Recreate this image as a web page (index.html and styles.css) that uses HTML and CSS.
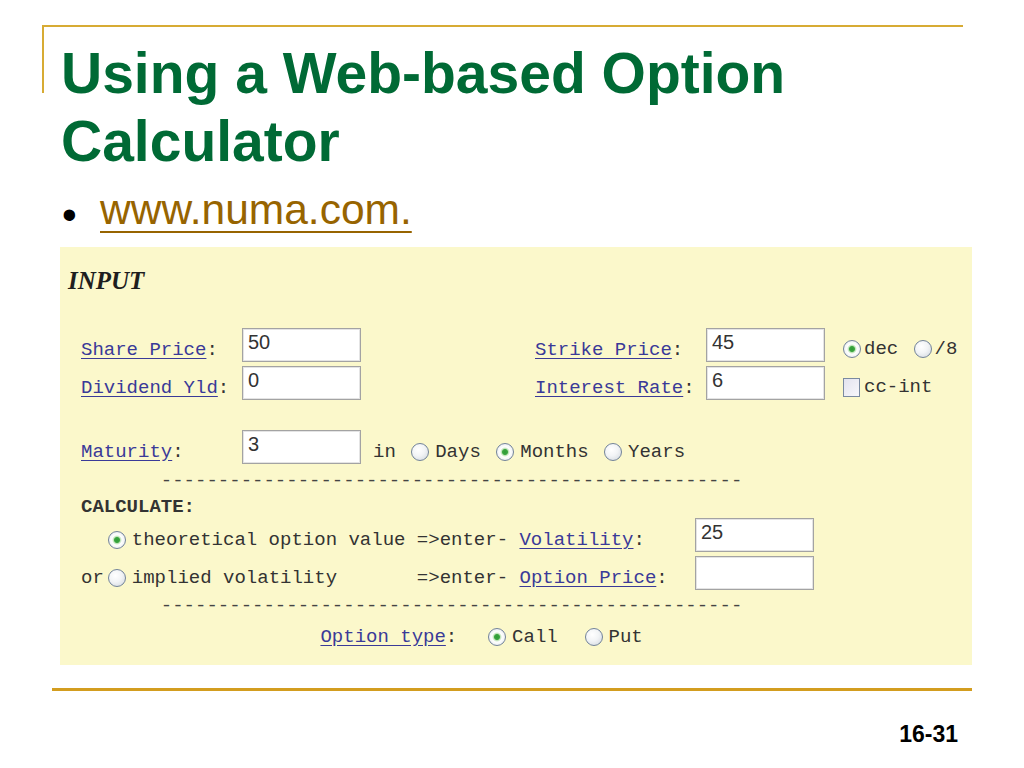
FILE: index.html
```html
<!DOCTYPE html>
<html lang="en">
<head>
<meta charset="utf-8">
<title>Using a Web-based Option Calculator</title>
<link rel="stylesheet" href="styles.css">
</head>
<body>
<div class="slide">
  <header class="head">
    <h1 class="title">Using a Web-based Option<br>Calculator</h1>
  </header>
  <div class="bullet"><span class="dot">•</span><a class="url" href="#">www.numa.com.</a></div>

  <section class="panel">
    <div class="h-input">INPUT</div>
    <div class="form">
      <div class="row r1">
        <span class="lbl"><a href="#">Share Price</a>:</span>
        <input class="box" type="text" value="50" readonly>
        <span class="lbl mid"><a href="#">Strike Price</a>:</span>
        <input class="box" type="text" value="45" readonly>
        <span class="opts"><input class="rad tight" type="radio" name="fmt" checked>dec <input class="rad tight" type="radio" name="fmt">/8</span>
      </div>
      <div class="row r2">
        <span class="lbl"><a href="#">Dividend Yld</a>:</span>
        <input class="box" type="text" value="0" readonly>
        <span class="lbl mid"><a href="#">Interest Rate</a>:</span>
        <input class="box" type="text" value="6" readonly>
        <span class="opts"><input class="chk" type="checkbox">cc-int</span>
      </div>
      <div class="row r3">
        <span class="lbl"><a href="#">Maturity</a>:</span>
        <input class="box" type="text" value="3" readonly>
        <span class="units">in <input class="rad" type="radio" name="unit">Days <input class="rad" type="radio" name="unit" checked>Months <input class="rad" type="radio" name="unit">Years</span>
      </div>
      <div class="row line dash1">       ---------------------------------------------------</div>
      <div class="row line calc">CALCULATE:</div>
      <div class="row r4">
        <span class="calc-left indent2"><input class="rad" type="radio" name="mode" checked>theoretical option value =&gt;enter- <a href="#">Volatility</a>:</span>
        <input class="box" type="text" value="25" readonly>
      </div>
      <div class="row r5">
        <span class="calc-left">or<input class="rad" type="radio" name="mode">implied volatility       =&gt;enter- <a href="#">Option Price</a>:</span>
        <input class="box" type="text" value="" readonly>
      </div>
      <div class="row line dash2">       ---------------------------------------------------</div>
      <div class="row line otype"><a href="#">Option type</a>:  <input class="rad wide" type="radio" name="type" checked>Call  <input class="rad" type="radio" name="type">Put</div>
    </div>
  </section>

  <footer class="foot">
    <div class="pageno">16-31</div>
  </footer>
</div>
</body>
</html>
```
FILE: styles.css
```css
html, body {
  margin: 0;
  padding: 0;
  background: #ffffff;
}

.slide {
  width: 1024px;
  height: 768px;
  overflow: hidden;
  font-family: "Liberation Sans", Arial, sans-serif;
}

/* header with gold corner frame */
.head {
  position: relative;
  margin: 25px 0 0 42px;
  width: 921px;
  border-top: 2px solid #d7ab34;
}

.head::before {
  content: "";
  position: absolute;
  left: 0;
  top: -2px;
  width: 2px;
  height: 68px;
  background: #d7ab34;
}

.title {
  margin: 12px 0 0 19px;
  font-weight: bold;
  font-size: 57px;
  line-height: 68px;
  color: #006a35;
}

.bullet {
  margin: 11px 0 0 62px;
  height: 48px;
  font-size: 42.5px;
  line-height: 48px;
  white-space: nowrap;
}

.dot {
  display: inline-block;
  width: 38px;
  font-size: 42px;
  vertical-align: -5px;
  color: #000;
}

.url {
  color: #976400;
  text-decoration: underline;
  text-decoration-thickness: 2px;
  text-underline-offset: 7px;
}

/* the yellow form screenshot */
.panel {
  box-sizing: border-box;
  margin: 13px 0 0 60px;
  width: 912px;
  height: 418px;
  padding: 19px 0 0 8px;
  background: #fbf8cb;
}

.h-input {
  font-family: "Liberation Serif", "Times New Roman", serif;
  font-weight: bold;
  font-style: italic;
  font-size: 25px;
  line-height: 30px;
  color: #1e1e1e;
}

.form {
  margin: 32px 0 0 13px;
  font-family: "Liberation Mono", "Courier New", monospace;
  font-size: 19px;
  color: #333333;
}

.row {
  display: flex;
  align-items: center;
  height: 34px;
  white-space: pre;
}

.r2 { margin-top: 4px; }
.r3 { margin-top: 29px; height: 35px; }
.line { height: 24px; }
.dash1 { margin-top: 5px; color: #444; }
.calc { margin-top: 3px; height: 22px; font-weight: bold; }
.r4 { margin-top: 0; }
.r5 { margin-top: 4px; }
.dash2 { margin-top: 4px; color: #444; }
.otype { margin-top: 4px; height: 30px; padding-left: 21ch; }

.form a {
  color: #3a3a98;
  text-decoration: underline;
  text-underline-offset: 3px;
}

.lbl {
  width: 161px;
  flex: none;
  padding-top: 10px;
}

.lbl.mid {
  width: 171px;
  margin-left: 174px;
}

.box {
  box-sizing: border-box;
  width: 119px;
  height: 34px;
  flex: none;
  margin: 0;
  padding: 0 5px 5px;
  border: 1px solid #a3a3a3;
  box-shadow: inset 0 0 0 1px #e4e4e4;
  background: #ffffff;
  font-family: "Liberation Sans", Arial, sans-serif;
  font-size: 20px;
  color: #333333;
  outline: none;
}

.opts {
  margin-left: 14px;
  padding-top: 8px;
  display: flex;
  align-items: center;
}

.units {
  margin-left: 12px;
  padding-top: 10px;
  display: flex;
  align-items: center;
}

.calc-left {
  box-sizing: border-box;
  width: 614px;
  flex: none;
  padding-top: 10px;
  display: flex;
  align-items: center;
}

.calc-left.indent2 { padding-left: 2ch; }

/* radio buttons and checkbox drawn like the old browser controls */
.rad {
  -webkit-appearance: none;
  appearance: none;
  box-sizing: border-box;
  width: 18px;
  height: 18px;
  margin: 0 6px 0 4px;
  border: 1px solid #72839a;
  border-radius: 50%;
  background: radial-gradient(circle at 40% 35%, #ffffff 0, #f2f4f6 45%, #cfd5dc 100%);
  flex: none;
}

.rad:checked {
  background: radial-gradient(circle at 50% 50%, #2f9a35 0, #3aa640 2.5px, #bfe4b8 3.5px, #ffffff 5px, #e9ecef 80%, #cfd5dc 100%);
}

.rad.tight { margin-right: 3px; }
.rad.wide { margin-left: 8px; }

.chk {
  -webkit-appearance: none;
  appearance: none;
  box-sizing: border-box;
  width: 17px;
  height: 19px;
  margin: 0 4px 0 4px;
  border: 1px solid #7a8aa0;
  background: linear-gradient(135deg, #e3e3ee, #f7f7fb);
  flex: none;
}

/* footer */
.foot {
  margin: 23px 0 0 52px;
  width: 920px;
  border-top: 3px solid #d39d1f;
}

.pageno {
  margin-top: 29px;
  padding-right: 14px;
  text-align: right;
  font-weight: bold;
  font-size: 23px;
  line-height: 28px;
  color: #000;
}
```
